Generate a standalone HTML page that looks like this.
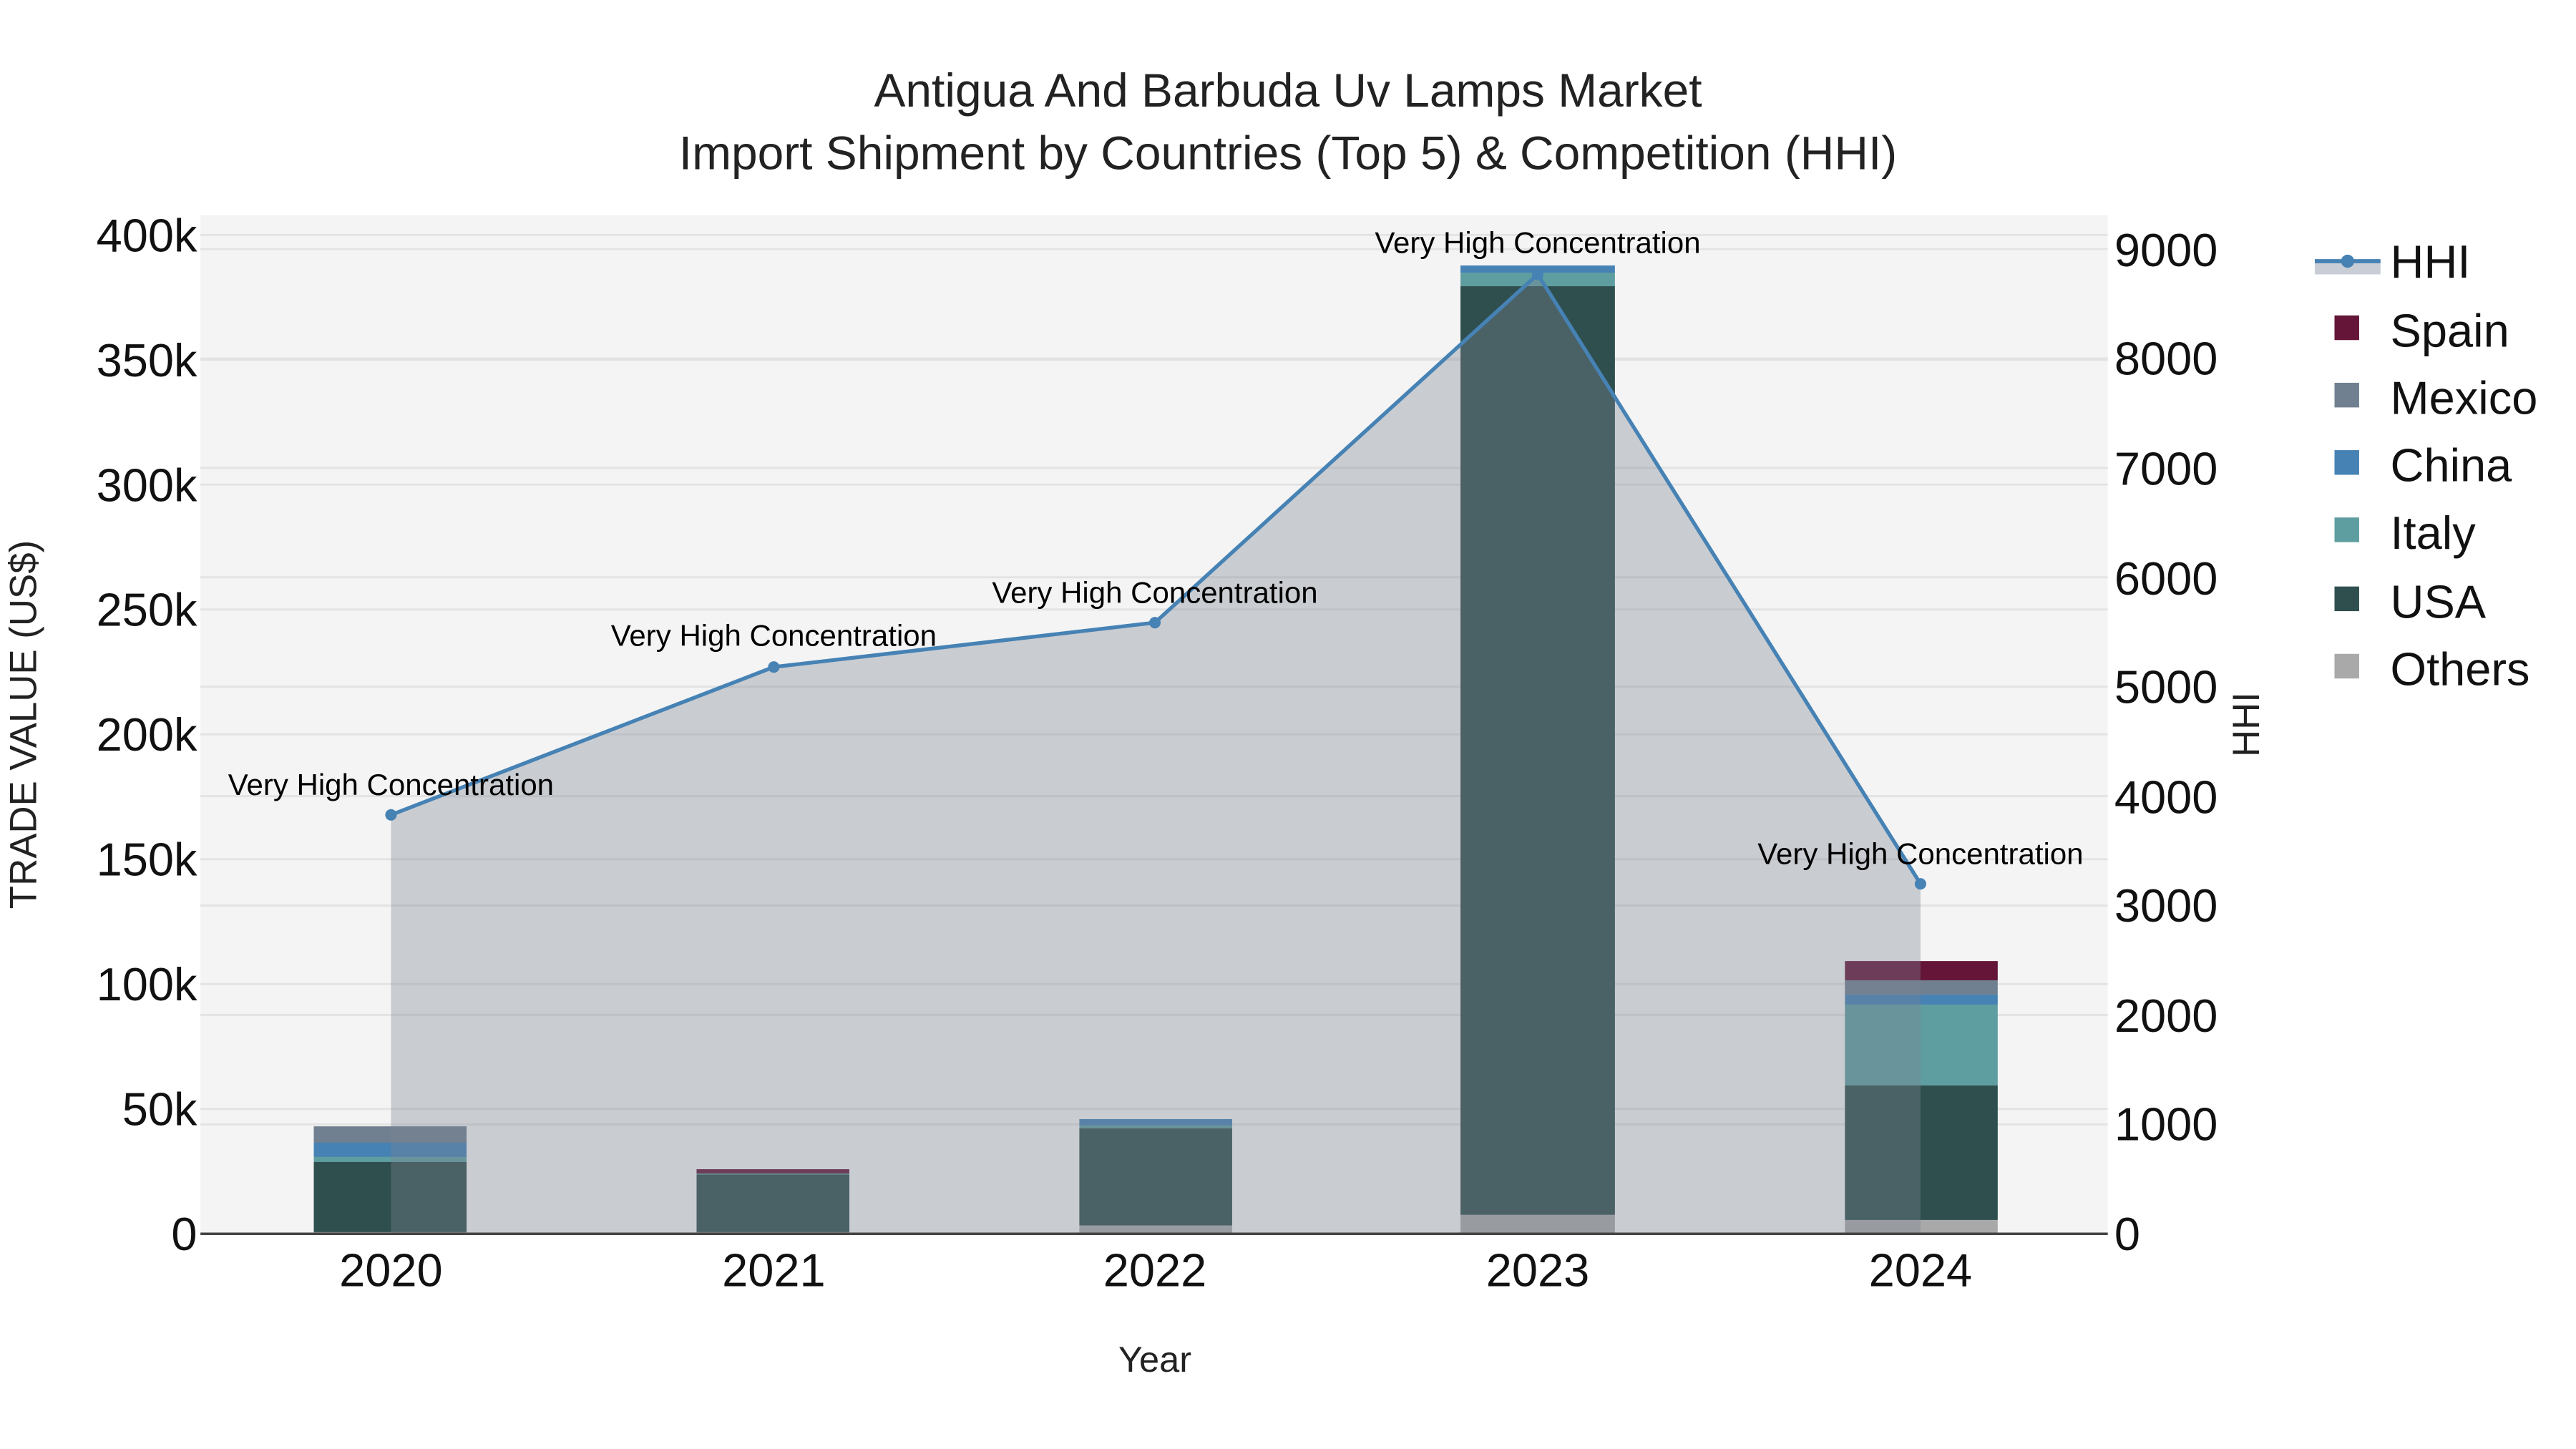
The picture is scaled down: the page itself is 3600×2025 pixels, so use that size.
<!DOCTYPE html>
<html><head><meta charset="utf-8"><style>
html,body{margin:0;padding:0;background:#fff;}
svg{display:block;font-family:"Liberation Sans",sans-serif;}
</style></head><body>
<svg width="3600" height="2025" viewBox="0 0 1568 882" preserveAspectRatio="none" xmlns="http://www.w3.org/2000/svg">
<rect x="0" y="0" width="1568" height="882" fill="#fff"/>
<rect x="122" y="131" width="1161" height="620" fill="#f4f4f4"/>
<g stroke="#e3e3e3" stroke-width="1.3">
<line x1="122" x2="1283" y1="675" y2="675"/><line x1="122" x2="1283" y1="599" y2="599"/>
<line x1="122" x2="1283" y1="523" y2="523"/><line x1="122" x2="1283" y1="447" y2="447"/>
<line x1="122" x2="1283" y1="371" y2="371"/><line x1="122" x2="1283" y1="295" y2="295"/>
<line x1="122" x2="1283" y1="219" y2="219"/><line x1="122" x2="1283" y1="143" y2="143"/>
<line x1="122" x2="1283" y1="684.4" y2="684.4"/><line x1="122" x2="1283" y1="617.8" y2="617.8"/>
<line x1="122" x2="1283" y1="551.2" y2="551.2"/><line x1="122" x2="1283" y1="484.6" y2="484.6"/>
<line x1="122" x2="1283" y1="418" y2="418"/><line x1="122" x2="1283" y1="351.4" y2="351.4"/>
<line x1="122" x2="1283" y1="284.8" y2="284.8"/><line x1="122" x2="1283" y1="218.2" y2="218.2"/>
<line x1="122" x2="1283" y1="151.6" y2="151.6"/>
</g>
<g>
<rect x="191" y="685.6" width="93" height="10" fill="#708090"/>
<rect x="191" y="695.5" width="93" height="8.8" fill="#4682b4"/>
<rect x="191" y="704.2" width="93" height="3.2" fill="#5f9ea0"/>
<rect x="191" y="707.3" width="93" height="42.7" fill="#2f4f4f"/>
<rect x="191" y="750" width="93" height="1" fill="#a9a9a9"/>

<rect x="424" y="711.7" width="93" height="2.6" fill="#641538"/>
<rect x="424" y="714.3" width="93" height="0.8" fill="#5f9ea0"/>
<rect x="424" y="715" width="93" height="35" fill="#2f4f4f"/>
<rect x="424" y="750" width="93" height="1" fill="#a9a9a9"/>

<rect x="657" y="681.2" width="93" height="3.9" fill="#4682b4"/>
<rect x="657" y="685" width="93" height="1.8" fill="#5f9ea0"/>
<rect x="657" y="686.8" width="93" height="59.2" fill="#2f4f4f"/>
<rect x="657" y="746" width="93" height="5" fill="#a9a9a9"/>

<rect x="889" y="161.6" width="94" height="4.5" fill="#4682b4"/>
<rect x="889" y="166" width="94" height="8.2" fill="#5f9ea0"/>
<rect x="889" y="174.2" width="94" height="565.3" fill="#2f4f4f"/>
<rect x="889" y="739.5" width="94" height="11.5" fill="#a9a9a9"/>

<rect x="1123" y="585" width="93" height="11.7" fill="#641538"/>
<rect x="1123" y="596.7" width="93" height="8.7" fill="#708090"/>
<rect x="1123" y="605.4" width="93" height="6.1" fill="#4682b4"/>
<rect x="1123" y="611.5" width="93" height="49.2" fill="#5f9ea0"/>
<rect x="1123" y="660.7" width="93" height="81.9" fill="#2f4f4f"/>
<rect x="1123" y="742.6" width="93" height="8.4" fill="#a9a9a9"/>
</g>
<polygon points="238,751 238,496 471,406 703,379 936,167 1169,538 1169,751" fill="rgb(123,132,146)" fill-opacity="0.355"/>
<polyline points="238,496 471,406 703,379 936,167 1169,538" fill="none" stroke="#4682b4" stroke-width="2.3"/>
<g fill="#4682b4"><circle cx="238" cy="496" r="3.5"/><circle cx="471" cy="406" r="3.5"/><circle cx="703" cy="379" r="3.5"/><circle cx="936" cy="167" r="3.5"/><circle cx="1169" cy="538" r="3.5"/></g>
<line x1="122" x2="1283" y1="751" y2="751" stroke="#444" stroke-width="1.5"/>
<g font-size="18.3" fill="#000" text-anchor="middle">
<text x="238" y="484">Very High Concentration</text>
<text x="471" y="393">Very High Concentration</text>
<text x="703" y="367">Very High Concentration</text>
<text x="936" y="154">Very High Concentration</text>
<text x="1169" y="526">Very High Concentration</text>
</g>
<g font-size="28.7" fill="#222" text-anchor="middle">
<text x="784" y="65">Antigua And Barbuda Uv Lamps Market</text>
<text x="784" y="103">Import Shipment by Countries (Top 5) &amp; Competition (HHI)</text>
</g>
<g font-size="28.3" fill="#111" text-anchor="end">
<text x="120" y="761">0</text><text x="120" y="685">50k</text><text x="120" y="609">100k</text>
<text x="120" y="533">150k</text><text x="120" y="457">200k</text><text x="120" y="381">250k</text>
<text x="120" y="305">300k</text><text x="120" y="229">350k</text><text x="120" y="153">400k</text>
</g>
<g font-size="28.3" fill="#111" text-anchor="start">
<text x="1287" y="761">0</text><text x="1287" y="694">1000</text><text x="1287" y="628">2000</text>
<text x="1287" y="561">3000</text><text x="1287" y="495">4000</text><text x="1287" y="428">5000</text>
<text x="1287" y="362">6000</text><text x="1287" y="295">7000</text><text x="1287" y="228">8000</text>
<text x="1287" y="162">9000</text>
</g>
<g font-size="28.3" fill="#111" text-anchor="middle">
<text x="238" y="783">2020</text><text x="471" y="783">2021</text><text x="703" y="783">2022</text>
<text x="936" y="783">2023</text><text x="1169" y="783">2024</text>
</g>
<text x="703" y="835" font-size="22" fill="#222" text-anchor="middle">Year</text>
<text transform="translate(22,441) rotate(-90)" font-size="23" fill="#222" text-anchor="middle">TRADE VALUE (US$)</text>
<text transform="translate(1375,441) rotate(-90)" font-size="23" fill="#222" text-anchor="middle">HHI</text>
<rect x="1409" y="160" width="40" height="7" fill="#c9cdd5"/>
<line x1="1409" x2="1449" y1="159" y2="159" stroke="#4682b4" stroke-width="2.5"/>
<circle cx="1429" cy="159" r="4" fill="#4682b4"/>
<rect x="1421" y="192" width="15" height="15" fill="#641538"/>
<rect x="1421" y="233" width="15" height="15" fill="#708090"/>
<rect x="1421" y="274" width="15" height="15" fill="#4682b4"/>
<rect x="1421" y="315" width="15" height="15" fill="#5f9ea0"/>
<rect x="1421" y="357" width="15" height="15" fill="#2f4f4f"/>
<rect x="1421" y="398" width="15" height="15" fill="#a9a9a9"/>
<g font-size="28.3" fill="#111">
<text x="1455" y="169">HHI</text><text x="1455" y="211">Spain</text><text x="1455" y="252">Mexico</text>
<text x="1455" y="293">China</text><text x="1455" y="334">Italy</text><text x="1455" y="376">USA</text>
<text x="1455" y="417">Others</text>
</g>
</svg>
</body></html>
